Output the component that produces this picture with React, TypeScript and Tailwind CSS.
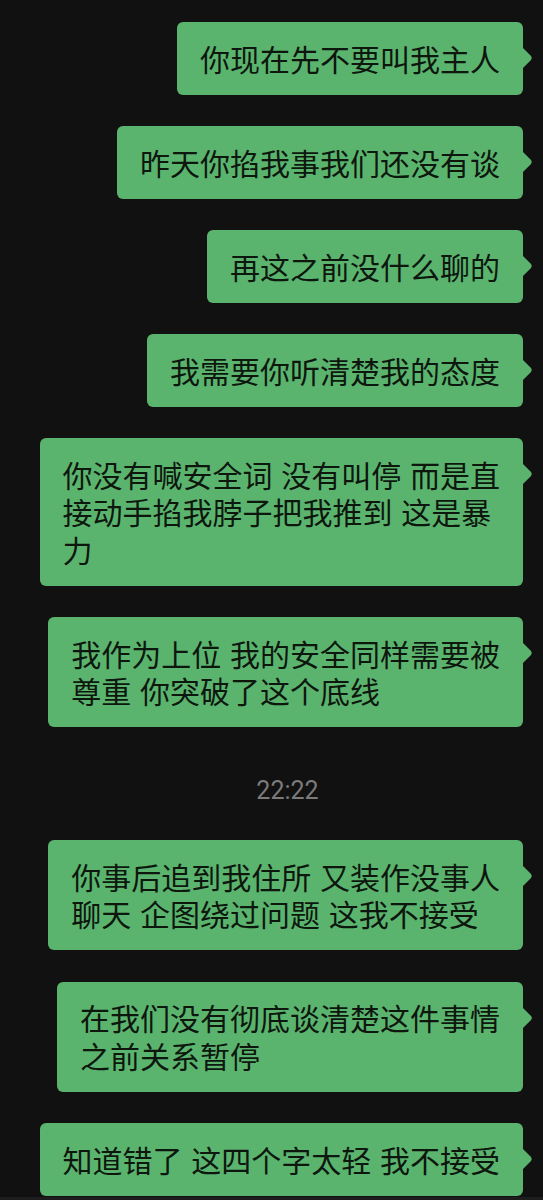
import React from "react";

const Tail = () => (
  <svg
    className="absolute right-[-10px] top-[25px]"
    width="11"
    height="22"
    viewBox="0 0 11 22"
  >
    <path d="M0 0 L9 9 Q10.6 11 9 13 L0 22 Z" fill="#5bb46e" />
  </svg>
);

const Bubble = ({ lines }: { lines: string[] }) => (
  <div className="flex justify-end pr-[20px]">
    <div className="relative rounded-[6px] bg-[#5bb46e] px-[23px] py-[17.5px]">
      <Tail />
      <div
        className="text-[30px] leading-[37.5px] text-[#0d170e] whitespace-pre [word-spacing:2px]"
        style={{ fontFamily: '"Noto Sans CJK SC", "Noto Sans", sans-serif' }}
      >
        {lines.map((l, i) => (
          <div key={i}>{l}</div>
        ))}
      </div>
    </div>
  </div>
);

export default function App() {
  return (
    <div className="h-[1200px] w-[543px] overflow-hidden bg-[#111111]">
      <div className="flex flex-col gap-[31.5px] pt-[22px]">
        <Bubble lines={["你现在先不要叫我主人"]} />
        <Bubble lines={["昨天你掐我事我们还没有谈"]} />
        <Bubble lines={["再这之前没什么聊的"]} />
        <Bubble lines={["我需要你听清楚我的态度"]} />
        <Bubble
          lines={["你没有喊安全词 没有叫停 而是直", "接动手掐我脖子把我推到 这是暴", "力"]}
        />
        <Bubble lines={["我作为上位 我的安全同样需要被", "尊重 你突破了这个底线"]} />
        <div
          className="mt-[17.5px] mb-[2.5px] flex justify-center pl-[32px] text-[25px] leading-[30px] text-[#7b7b7b]"
          style={{ fontFamily: 'Roboto, "Noto Sans", sans-serif' }}
        >
          22:22
        </div>
        <Bubble lines={["你事后追到我住所 又装作没事人", "聊天 企图绕过问题 这我不接受"]} />
        <Bubble lines={["在我们没有彻底谈清楚这件事情", "之前关系暂停"]} />
        <Bubble lines={["知道错了 这四个字太轻 我不接受"]} />
      </div>
      <div className="mt-[1px] h-[20px] bg-[#1d1d1d]" />
    </div>
  );
}
